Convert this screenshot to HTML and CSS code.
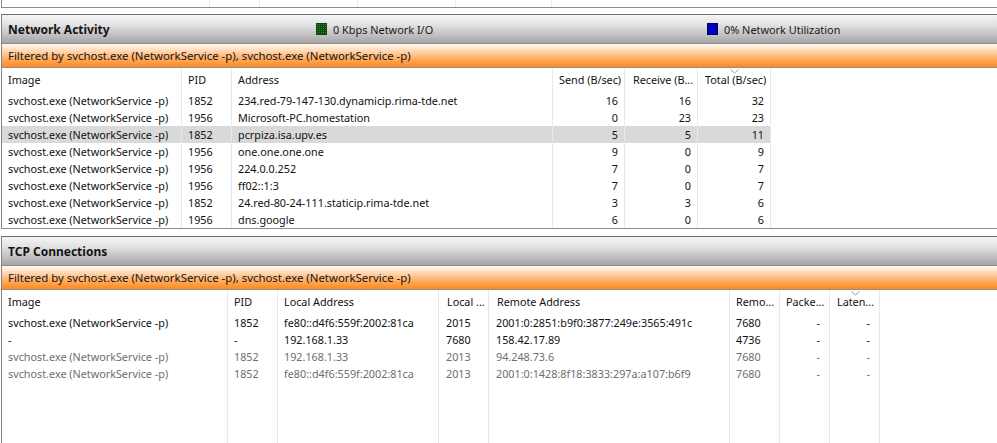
FILE: index.html
```html
<!DOCTYPE html>
<html>
<head>
<meta charset="utf-8">
<link rel="stylesheet" href="styles.css">
</head>
<body>
<div class="prev">
  <div class="c"></div><div class="c"></div><div class="c"></div><div class="c"></div><div class="c"></div>
</div>

<section class="panel net">
  <div class="head">
    <div class="title">Network Activity</div>
    <div class="legend leg1">
      <svg class="ico" width="11" height="12" viewBox="0 0 11 12">
        <rect x="0.5" y="0.5" width="10" height="11" fill="#1c8a1c" stroke="#1f3d1f"/>
        <path d="M1 2.5h9M1 4.5h9M1 6.5h9M1 8.5h9M1 10.5h9M2.5 1v10M4.5 1v10M6.5 1v10M8.5 1v10" stroke="#0b460b" stroke-width="0.9"/>
      </svg>
      <span>0 Kbps Network I/O</span>
    </div>
    <div class="legend">
      <svg class="ico" width="11" height="12" viewBox="0 0 11 12">
        <rect x="0.5" y="0.5" width="10" height="11" fill="#0000c4" stroke="#00005c"/>
      </svg>
      <span>0% Network Utilization</span>
    </div>
  </div>
  <div class="filter">Filtered by svchost.exe (NetworkService -p), svchost.exe (NetworkService -p)</div>
  <div class="row thead">
    <div class="c">Image</div>
    <div class="c">PID</div>
    <div class="c">Address</div>
    <div class="c">Send (B/sec)</div>
    <div class="c h2">Receive (B...</div>
    <div class="c sorted">Total (B/sec)<svg class="arrow" width="9" height="5" viewBox="0 0 9 5"><path d="M0.5 0.5L4.5 4L8.5 0.5" fill="none" stroke="#9a9a9a"/></svg></div>
  </div>
  <div class="row"><div class="c">svchost.exe (NetworkService -p)</div><div class="c">1852</div><div class="c">234.red-79-147-130.dynamicip.rima-tde.net</div><div class="c r">16</div><div class="c r">16</div><div class="c r">32</div></div>
  <div class="row"><div class="c">svchost.exe (NetworkService -p)</div><div class="c">1956</div><div class="c">Microsoft-PC.homestation</div><div class="c r">0</div><div class="c r">23</div><div class="c r">23</div></div>
  <div class="row sel"><div class="c">svchost.exe (NetworkService -p)</div><div class="c">1852</div><div class="c">pcrpiza.isa.upv.es</div><div class="c r">5</div><div class="c r">5</div><div class="c r">11</div></div>
  <div class="row"><div class="c">svchost.exe (NetworkService -p)</div><div class="c">1956</div><div class="c">one.one.one.one</div><div class="c r">9</div><div class="c r">0</div><div class="c r">9</div></div>
  <div class="row"><div class="c">svchost.exe (NetworkService -p)</div><div class="c">1956</div><div class="c">224.0.0.252</div><div class="c r">7</div><div class="c r">0</div><div class="c r">7</div></div>
  <div class="row"><div class="c">svchost.exe (NetworkService -p)</div><div class="c">1956</div><div class="c">ff02::1:3</div><div class="c r">7</div><div class="c r">0</div><div class="c r">7</div></div>
  <div class="row"><div class="c">svchost.exe (NetworkService -p)</div><div class="c">1852</div><div class="c">24.red-80-24-111.staticip.rima-tde.net</div><div class="c r">3</div><div class="c r">3</div><div class="c r">6</div></div>
  <div class="row"><div class="c">svchost.exe (NetworkService -p)</div><div class="c">1956</div><div class="c">dns.google</div><div class="c r">6</div><div class="c r">0</div><div class="c r">6</div></div>
</section>

<section class="panel tcp">
  <div class="head">
    <div class="title">TCP Connections</div>
  </div>
  <div class="filter">Filtered by svchost.exe (NetworkService -p), svchost.exe (NetworkService -p)</div>
  <div class="row thead">
    <div class="c">Image</div>
    <div class="c">PID</div>
    <div class="c">Local Address</div>
    <div class="c h2">Local ...</div>
    <div class="c h2">Remote Address</div>
    <div class="c">Remo...</div>
    <div class="c">Packe...</div>
    <div class="c sorted">Laten...<svg class="arrow" width="9" height="5" viewBox="0 0 9 5"><path d="M0.5 0.5L4.5 4L8.5 0.5" fill="none" stroke="#9a9a9a"/></svg></div>
  </div>
  <div class="row"><div class="c">svchost.exe (NetworkService -p)</div><div class="c">1852</div><div class="c">fe80::d4f6:559f:2002:81ca</div><div class="c h2">2015</div><div class="c h2">2001:0:2851:b9f0:3877:249e:3565:491c</div><div class="c">7680</div><div class="c r d">-</div><div class="c r d">-</div></div>
  <div class="row"><div class="c">-</div><div class="c">-</div><div class="c">192.168.1.33</div><div class="c h2">7680</div><div class="c h2">158.42.17.89</div><div class="c">4736</div><div class="c r d">-</div><div class="c r d">-</div></div>
  <div class="row dim"><div class="c">svchost.exe (NetworkService -p)</div><div class="c">1852</div><div class="c">192.168.1.33</div><div class="c h2">2013</div><div class="c h2">94.248.73.6</div><div class="c">7680</div><div class="c r d">-</div><div class="c r d">-</div></div>
  <div class="row dim"><div class="c">svchost.exe (NetworkService -p)</div><div class="c">1852</div><div class="c">fe80::d4f6:559f:2002:81ca</div><div class="c h2">2013</div><div class="c h2">2001:0:1428:8f18:3833:297a:a107:b6f9</div><div class="c">7680</div><div class="c r d">-</div><div class="c r d">-</div></div>
  <div class="row fill"><div class="c"></div><div class="c"></div><div class="c"></div><div class="c"></div><div class="c"></div><div class="c"></div><div class="c"></div><div class="c"></div></div>
</section>
</body>
</html>
```

FILE: styles.css
```css
html, body {
  margin: 0;
  padding: 0;
  background: #ffffff;
  overflow: hidden;
}

body {
  width: 997px;
  height: 443px;
  font-family: "Noto Sans", "Open Sans", sans-serif;
  font-size: 10.8px;
  color: #111111;
}

* {
  box-sizing: border-box;
}

.prev {
  margin-left: 1px;
  height: 8px;
  border-left: 1px solid #8a8a8a;
  border-bottom: 1px solid #8c8c8c;
  display: grid;
  grid-template-columns: 208px 50px 98px 98px 96px;
}

.prev .c {
  border-right: 1px solid #e6e8ee;
}

.panel {
  margin-left: 1px;
  border-left: 1px solid #828282;
  border-top: 1px solid #6e6e6e;
}

.net {
  margin-top: 6px;
  border-bottom: 1px solid #8c8c8c;
}

.tcp {
  margin-top: 7px;
}

.head {
  height: 29px;
  border-bottom: 1px solid #8a8a8a;
  background: linear-gradient(#f5f5f5 0%, #e2e2e2 35%, #bdbdbd 75%, #a4a4a4 100%);
  display: flex;
  align-items: center;
}

.title {
  width: 314px;
  padding-left: 6px;
  font-weight: 700;
  font-size: 12px;
  color: #141414;
}

.legend {
  display: flex;
  align-items: center;
  gap: 6px;
  font-size: 10.9px;
  color: #1a1a1a;
}

.leg1 {
  width: 391px;
}

.ico {
  display: block;
}

.filter {
  height: 24px;
  line-height: 23px;
  padding-left: 6px;
  border-bottom: 1px solid #8e8e8e;
  background: linear-gradient(#fff8f0 0%, #ffd2a8 35%, #ffa653 70%, #fd8a20 100%);
  font-size: 11.4px;
  color: #141414;
  white-space: nowrap;
}

.row {
  display: grid;
  height: 17px;
  line-height: 17px;
}

.net .row {
  grid-template-columns: 180px 50px 321px 72px 73px 73px;
}

.tcp .row {
  grid-template-columns: 226px 50px 161px 50px 241px 50px 50px 50px;
}

.row.thead {
  height: 24px;
  line-height: 24px;
}

.c {
  border-right: 1px solid #e7e9ef;
  padding: 0 6px;
  white-space: nowrap;
  overflow: hidden;
}

.h2 {
  padding-left: 7px;
}

.thead .h2 {
  padding-left: 8px;
}

.r {
  text-align: right;
}

.d {
  padding-right: 9px;
}

.sorted {
  position: relative;
  padding-left: 7px;
}

.arrow {
  position: absolute;
  top: 1px;
  left: 50%;
  margin-left: -4px;
}

.sel .c {
  background: #d9d9d9;
}

.dim {
  color: #6e6e6e;
}

.row.fill {
  height: 80px;
}
```
